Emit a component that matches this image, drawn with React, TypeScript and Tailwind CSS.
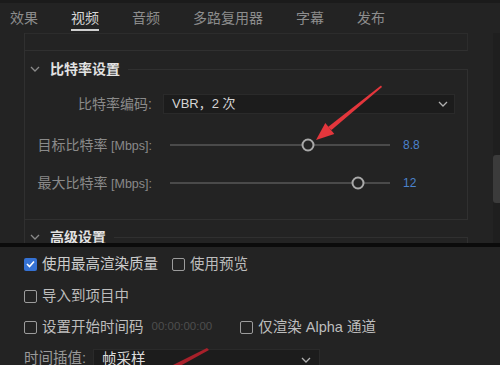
import React from "react";

const font = '"Liberation Sans", "Noto Sans CJK SC", sans-serif';

const tabs = ["效果", "视频", "音频", "多路复用器", "字幕", "发布"];

function Chevron({ className }: { className?: string }) {
  return (
    <svg width="10" height="6" viewBox="0 0 10 6" className={className}>
      <path d="M1 1 L5 5 L9 1" fill="none" stroke="currentColor" strokeWidth="1.3" />
    </svg>
  );
}

function Checkbox({ checked }: { checked?: boolean }) {
  if (checked) {
    return (
      <span className="w-[13px] h-[13px] shrink-0 rounded-[2px] bg-[#3572d4] flex items-center justify-center">
        <svg width="9" height="8" viewBox="0 0 9 8">
          <path d="M1 4 L3.5 6.5 L8 1.5" fill="none" stroke="#fff" strokeWidth="1.6" />
        </svg>
      </span>
    );
  }
  return <span className="w-[13px] h-[13px] shrink-0 rounded-[2px] border-[1.5px] border-[#9c9c9c]" />;
}

function SectionHeader({ title }: { title: string }) {
  return (
    <div className="-mt-[13px] h-[24px] flex items-center">
      <div className="flex items-center bg-[#232323] pl-[5px] pr-[8px] h-full">
        <Chevron className="text-[#8a8a8a]" />
        <span className="ml-[10px] text-[14px] font-bold text-[#e2e2e2] leading-[20px]">{title}</span>
      </div>
    </div>
  );
}

type SliderProps = {
  label: string;
  value: string;
  pos: number;
};

function SliderRow({ label, value, pos }: SliderProps) {
  return (
    <div className="flex items-center h-[20px]">
      <div className="w-[127px] text-right text-[14px] leading-[20px] text-[#8a8a8a] whitespace-nowrap">
        {label}
        <span className="text-[12.5px]"> [Mbps]:</span>
      </div>
      <div className="ml-[18px] w-[220px] h-[2px] bg-[#4a4a4a] relative">
        <span
          className="absolute top-1/2 w-[13px] h-[13px] rounded-full border-2 border-[#a9a9a9] bg-[#232323] -translate-x-1/2 -translate-y-1/2"
          style={{ left: pos }}
        />
      </div>
      <span className="ml-[13px] text-[12px] text-[#4b82cc]">{value}</span>
    </div>
  );
}

function CheckItem({ label, checked, bright }: { label: string; checked?: boolean; bright?: boolean }) {
  return (
    <div className="flex items-center">
      <Checkbox checked={checked} />
      <span
        className={`ml-[5px] text-[14.5px] leading-[20px] whitespace-nowrap ${
          bright ? "text-[#cdcdcd]" : "text-[#bdbdbd]"
        }`}
      >
        {label}
      </span>
    </div>
  );
}

export default function App() {
  return (
    <div className="w-[500px] h-[365px] bg-[#232323] overflow-hidden relative" style={{ fontFamily: font }}>
      <div className="h-[3px] bg-[#1b1b1b]" />

      {/* tabs */}
      <div className="h-[30px] flex items-start pt-[6px] pl-[10px] gap-[33px]">
        {tabs.map((tab) => (
          <div key={tab} className="flex flex-col">
            <span
              className={`text-[14px] leading-[19px] whitespace-nowrap ${
                tab === "视频" ? "text-[#d6d6d6]" : "text-[#8d8d8d]"
              }`}
            >
              {tab}
            </span>
            <span className={`mt-[1px] h-[2px] ${tab === "视频" ? "bg-[#cfcfcf]" : ""}`} />
          </div>
        ))}
      </div>

      {/* settings area */}
      <div className="h-[210px] flex">
        <div className="ml-[24px] w-[444px] h-full overflow-hidden border-l border-[#303030]">
          <div className="h-[18px] border-t border-b border-r border-[#2c2c2c] border-b-[#303030]" />

          <div className="mt-[18px] h-[151px] border-t border-r border-b border-[#303030]">
            <SectionHeader title="比特率设置" />
            <div className="mt-[13px] flex items-center h-[20px]">
              <div className="w-[127px] text-right text-[14px] leading-[20px] text-[#8a8a8a]">比特率编码:</div>
              <div className="ml-[11px] w-[292px] h-[20px] bg-[#1c1c1c] border border-[#2a2a2a] flex items-center justify-between pl-[8px] pr-[6px]">
                <span className="text-[13px] text-[#d4d4d4]">VBR，2 次</span>
                <Chevron className="text-[#b0b0b0]" />
              </div>
            </div>
            <div className="mt-[21px]">
              <SliderRow label="目标比特率" value="8.8" pos={138} />
            </div>
            <div className="mt-[18px]">
              <SliderRow label="最大比特率" value="12" pos={188} />
            </div>
          </div>

          <div className="mt-[17px] h-[40px] border-t border-r border-[#303030]">
            <SectionHeader title="高级设置" />
          </div>
        </div>
        <div className="flex-1" />
        <div className="w-[7px] h-full bg-[#1f1f1f] flex flex-col">
          <div className="mt-[122px] h-[48px] rounded-l-[3px] bg-[#3b3b3b]" />
        </div>
      </div>

      <div className="h-[4px] bg-[#0b0b0b]" />

      {/* lower panel */}
      <div className="pl-[24px] flex flex-col">
        <div className="mt-[7px] h-[20px] flex items-center gap-[14px]">
          <CheckItem label="使用最高渲染质量" checked bright />
          <CheckItem label="使用预览" />
        </div>
        <div className="mt-[12px] h-[20px] flex items-center">
          <CheckItem label="导入到项目中" />
        </div>
        <div className="mt-[11px] h-[20px] flex items-center">
          <CheckItem label="设置开始时间码" />
          <span className="ml-[8px] text-[11.5px] text-[#4e4e4e]">00:00:00:00</span>
          <div className="ml-[28px]">
            <CheckItem label="仅渲染 Alpha 通道" />
          </div>
        </div>
        <div className="mt-[11px] h-[20px] flex items-center">
          <span className="text-[14.5px] leading-[20px] text-[#9a9a9a] whitespace-nowrap">时间插值:</span>
          <div className="ml-[7px] mt-[4px] w-[227px] h-[22px] bg-[#1c1c1c] border border-[#2a2a2a] flex items-center justify-between pl-[8px] pr-[8px]">
            <span className="text-[14.5px] text-[#dcdcdc]">帧采样</span>
            <Chevron className="text-[#b0b0b0]" />
          </div>
        </div>
      </div>

      {/* annotation arrows */}
      <svg className="absolute inset-0 pointer-events-none" width="500" height="365" viewBox="0 0 500 365">
        <polygon points="381,85.5 382,87 331.5,130 328,127" fill="#e3363c" />
        <polygon points="316,140 325.3,123.1 334.3,133.9" fill="#e3363c" />
        <polygon points="207,348 209,350 180,366 171,366" fill="#a8202a" />
      </svg>
    </div>
  );
}
